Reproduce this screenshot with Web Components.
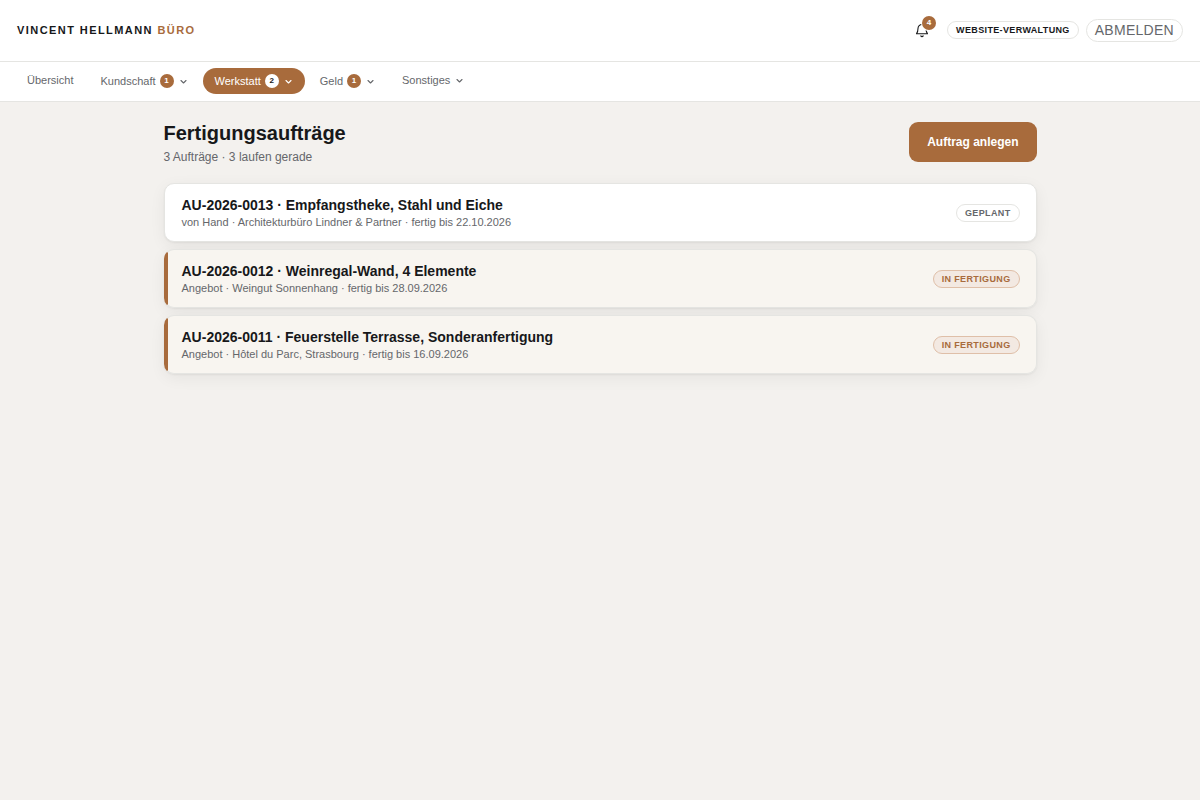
<!DOCTYPE html>
<html lang="de">
<head>
<meta charset="utf-8">
<meta name="viewport" content="width=device-width, initial-scale=1">
<title>Fertigungsaufträge</title>
<style>
  :root {
    --accent: #a86b3c;
    --ink: #17181a;
    --muted: #65676b;
    --line: #e5e5e2;
    --ground: #f3f1ee;
  }
  body {
    margin: 0;
    background: var(--ground);
    color: var(--ink);
    font-family: "Liberation Sans", Arial, sans-serif;
  }
</style>
</head>
<body>
<buero-app></buero-app>

<script>
class BaseElement extends HTMLElement {
  connectedCallback() {
    if (this.shadowRoot) return;
    this.attachShadow({ mode: "open" }).innerHTML =
      `<style>*{box-sizing:border-box}${this.styles()}</style>${this.markup()}`;
  }
}

customElements.define("count-badge", class extends BaseElement {
  styles() {
    return `
      :host { display: inline-flex; align-items: center; justify-content: center;
        min-width: 14px; height: 14px; border-radius: 7px; font-size: 8px; font-weight: 700;
        line-height: 14px; background: var(--accent); color: #fff; }
      :host([inverted]) { background: #fff; color: var(--ink); }`;
  }
  markup() { return `<slot></slot>`; }
});

customElements.define("nav-item", class extends BaseElement {
  styles() {
    return `
      :host { display: block; }
      button, a { display: flex; align-items: center; height: 24px; padding: 0 12px; border: 0;
        border-radius: 13px; background: none; color: var(--muted); font: inherit; font-size: 11px;
        line-height: 16px; text-decoration: none; cursor: pointer; white-space: nowrap; }
      :host([count]) button { height: 26px; }
      .active { background: var(--accent); color: #fff; }
      count-badge { margin-left: 4px; }
      svg { width: 9px; height: 9px; margin-left: 5px; }`;
  }
  markup() {
    const count = this.getAttribute("count");
    const active = this.hasAttribute("active");
    if (this.hasAttribute("href")) return `<a href="${this.getAttribute("href")}"><slot></slot></a>`;
    return `<button type="button" class="${active ? "active" : ""}"><slot></slot>
      ${count ? `<count-badge ${active ? "inverted" : ""}>${count}</count-badge>` : ""}
      <svg viewBox="0 0 9 9" fill="none" stroke="currentColor" stroke-width="1.1" stroke-linecap="round" stroke-linejoin="round" aria-hidden="true"><path d="M2 3.500 4.500 6 7 3.500"/></svg></button>`;
  }
});

customElements.define("main-nav", class extends BaseElement {
  styles() {
    return `
      :host { display: block; background: #fff; border-bottom: 1px solid var(--line); }
      nav { display: flex; align-items: flex-start; gap: 3px; padding: 6px 15px 7px; }`;
  }
  markup() {
    return `<nav aria-label="Hauptnavigation">
      <nav-item href="#uebersicht">Übersicht</nav-item>
      <nav-item count="1">Kundschaft</nav-item>
      <nav-item count="2" active>Werkstatt</nav-item>
      <nav-item count="1">Geld</nav-item>
      <nav-item>Sonstiges</nav-item>
    </nav>`;
  }
});

customElements.define("site-header", class extends BaseElement {
  styles() {
    return `
      :host { display: block; background: #fff; border-bottom: 1px solid var(--line); }
      header { display: flex; align-items: center; justify-content: space-between; padding: 12px 17px 13px; }
      .brand { color: var(--ink); text-decoration: none; font-size: 11px; font-weight: 700; letter-spacing: .13em; line-height: 16px; }
      .brand span { color: var(--accent); }
      .tools { display: flex; align-items: center; gap: 7px; }
      .bell { position: relative; display: flex; align-items: center; justify-content: center;
        width: 36px; height: 36px; padding: 0; border: 0; background: none; color: var(--ink); cursor: pointer; }
      .bell svg { width: 16px; height: 16px; }
      .bell count-badge { position: absolute; top: 4px; right: 4px; box-shadow: 0 0 0 1px #fff; }
      .pill { display: block; border: 1px solid var(--line); border-radius: 12px; background: #fff; padding: 0 8px; font-family: inherit; }
      .site { color: var(--ink); text-decoration: none; font-size: 9px; line-height: 16px; font-weight: 700; letter-spacing: .04em; }
      .out { color: var(--muted); font-size: 14px; line-height: 21px; letter-spacing: .02em; cursor: pointer; }`;
  }
  markup() {
    return `<header>
      <a class="brand" href="#start">VINCENT HELLMANN <span>BÜRO</span></a>
      <div class="tools">
        <button class="bell" type="button" aria-label="Benachrichtigungen">
          <svg viewBox="0 0 16 16" fill="none" stroke="currentColor" stroke-width="1.1" stroke-linecap="round" stroke-linejoin="round" aria-hidden="true"><path d="M8 2.500a4 4 0 0 0-4 4c0 2.800-.6 4-1.500 5.300h11C12.600 10.500 12 9.300 12 6.500a4 4 0 0 0-4-4z"/><path d="M6.800 13.900a1.400 1.400 0 0 0 2.400 0"/></svg>
          <count-badge>4</count-badge>
        </button>
        <a class="pill site" href="#website">WEBSITE-VERWALTUNG</a>
        <button class="pill out" type="button">ABMELDEN</button>
      </div>
    </header>`;
  }
});

customElements.define("status-pill", class extends BaseElement {
  styles() {
    return `
      :host { display: block; flex: none; border: 1px solid var(--line); border-radius: 9px;
        padding: 0 8px; font-size: 9px; line-height: 16px; font-weight: 700; letter-spacing: .04em;
        background: #fff; color: var(--muted); }
      :host([running]) { background: #f3e9e2; border-color: #dfbfa8; color: var(--accent); }`;
  }
  markup() { return `<slot></slot>`; }
});

customElements.define("order-card", class extends BaseElement {
  styles() {
    return `
      :host { display: block; }
      a { display: flex; align-items: center; justify-content: space-between; gap: 16px;
        padding: 12px 16px 11px 17px; border: 1px solid var(--line); border-radius: 10px;
        background: #fff; color: var(--ink); text-decoration: none;
        box-shadow: 0 1px 2px rgba(20,20,20,.05), 0 4px 16px rgba(20,20,20,.06); }
      :host([running]) a { border-left-color: transparent;
        background: linear-gradient(to right, var(--accent) 4px, #f8f5f0 4px) border-box; }
      h2 { margin: 0; font-size: 14px; line-height: 18px; font-weight: 700; }
      p { margin: 0; font-size: 11px; line-height: 16px; color: var(--muted); }`;
  }
  markup() {
    const running = this.hasAttribute("running");
    return `<a href="#auftrag"><div><h2><slot></slot></h2><p><slot name="meta"></slot></p></div>
      <status-pill ${running ? "running" : ""}>${running ? "IN FERTIGUNG" : "GEPLANT"}</status-pill></a>`;
  }
});

customElements.define("buero-app", class extends BaseElement {
  styles() {
    return `
      :host { display: block; }
      main { max-width: 873px; margin: 0 auto; padding: 20px 0; }
      .head { display: flex; align-items: flex-start; justify-content: space-between; margin-bottom: 17px; }
      h1 { margin: 0; font-size: 20px; line-height: 22px; font-weight: 700; }
      .head p { margin: 4px 0 0; font-size: 12px; line-height: 18px; color: var(--muted); }
      .add { height: 40px; padding: 0 18px; border: 0; border-radius: 9px; background: var(--accent); color: #fff;
        font: inherit; font-size: 12px; font-weight: 700; cursor: pointer; }
      .list { display: grid; gap: 7px; }`;
  }
  markup() {
    return `<site-header></site-header><main-nav></main-nav>
    <main>
      <div class="head">
        <div><h1>Fertigungsaufträge</h1><p>3 Aufträge · 3 laufen gerade</p></div>
        <button class="add" type="button">Auftrag anlegen</button>
      </div>
      <div class="list">
        <order-card>AU-2026-0013 · Empfangstheke, Stahl und Eiche<span slot="meta">von Hand · Architekturbüro Lindner &amp; Partner · fertig bis 22.10.2026</span></order-card>
        <order-card running>AU-2026-0012 · Weinregal-Wand, 4 Elemente<span slot="meta">Angebot · Weingut Sonnenhang · fertig bis 28.09.2026</span></order-card>
        <order-card running>AU-2026-0011 · Feuerstelle Terrasse, Sonderanfertigung<span slot="meta">Angebot · Hôtel du Parc, Strasbourg · fertig bis 16.09.2026</span></order-card>
      </div>
    </main>`;
  }
});
</script>
</body>
</html>
